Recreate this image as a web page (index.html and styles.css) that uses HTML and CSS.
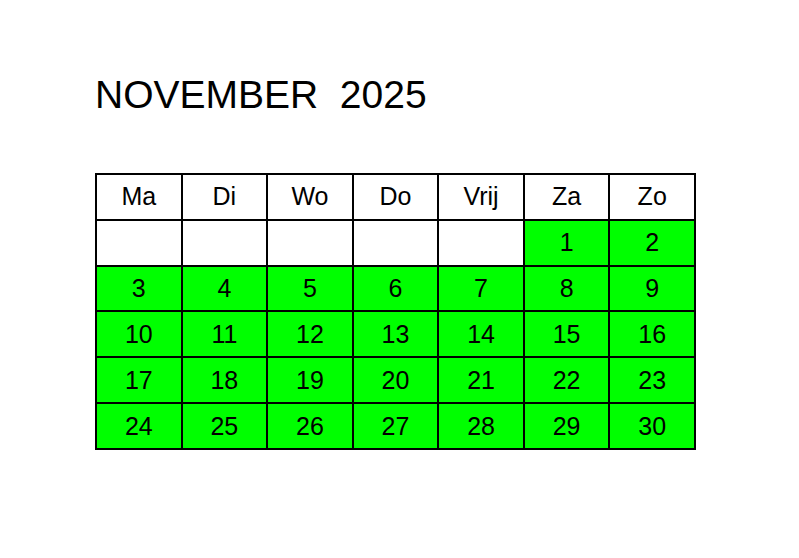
FILE: index.html
```html
<!DOCTYPE html>
<html lang="nl">
<head>
<meta charset="utf-8">
<title>November 2025</title>
<link rel="stylesheet" href="styles.css">
</head>
<body>
<div class="page">
  <h1 class="title">NOVEMBER  2025</h1>
  <div class="cal">
    <div class="cell head">Ma</div>
    <div class="cell head">Di</div>
    <div class="cell head">Wo</div>
    <div class="cell head">Do</div>
    <div class="cell head">Vrij</div>
    <div class="cell head">Za</div>
    <div class="cell head">Zo</div>
    <div class="cell empty"></div>
    <div class="cell empty"></div>
    <div class="cell empty"></div>
    <div class="cell empty"></div>
    <div class="cell empty"></div>
    <div class="cell day">1</div>
    <div class="cell day">2</div>
    <div class="cell day">3</div>
    <div class="cell day">4</div>
    <div class="cell day">5</div>
    <div class="cell day">6</div>
    <div class="cell day">7</div>
    <div class="cell day">8</div>
    <div class="cell day">9</div>
    <div class="cell day">10</div>
    <div class="cell day">11</div>
    <div class="cell day">12</div>
    <div class="cell day">13</div>
    <div class="cell day">14</div>
    <div class="cell day">15</div>
    <div class="cell day">16</div>
    <div class="cell day">17</div>
    <div class="cell day">18</div>
    <div class="cell day">19</div>
    <div class="cell day">20</div>
    <div class="cell day">21</div>
    <div class="cell day">22</div>
    <div class="cell day">23</div>
    <div class="cell day">24</div>
    <div class="cell day">25</div>
    <div class="cell day">26</div>
    <div class="cell day">27</div>
    <div class="cell day">28</div>
    <div class="cell day">29</div>
    <div class="cell day">30</div>
  </div>
</div>
</body>
</html>
```

FILE: styles.css
```css
html, body {
  margin: 0;
  padding: 0;
  background: #ffffff;
}

body {
  font-family: "Liberation Sans", Arial, sans-serif;
  color: #000000;
}

.page {
  padding: 75px 0 0 95px;
}

.title {
  margin: 0;
  font-size: 39px;
  font-weight: normal;
  line-height: 39px;
  white-space: pre;
}

.cal {
  margin-top: 59px;
  width: 601px;
  height: 277px;
  box-sizing: border-box;
  display: grid;
  grid-template-columns: repeat(7, 1fr);
  grid-template-rows: repeat(6, 1fr);
  gap: 2px;
  padding: 2px;
  background: #000000;
}

.cell {
  display: flex;
  align-items: center;
  justify-content: center;
  font-size: 25px;
  background: #ffffff;
}

.day {
  background: #00ff00;
}
```
